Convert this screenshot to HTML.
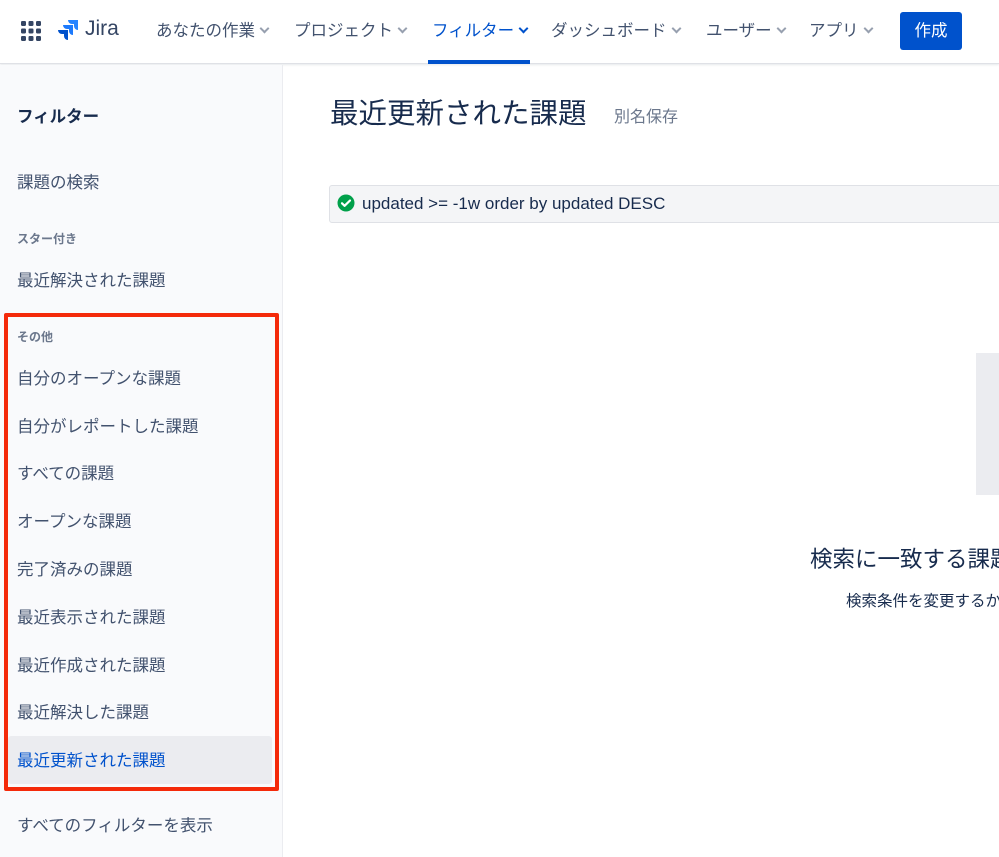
<!DOCTYPE html>
<html><head><meta charset="utf-8"><style>
*{margin:0;padding:0;box-sizing:border-box}
body{width:999px;height:857px;overflow:hidden;background:#fff;font-family:"Liberation Sans","Noto Sans CJK JP",sans-serif;color:#42526e;position:relative}
.a{position:absolute;white-space:nowrap}
#hdr{position:absolute;left:0;top:0;width:999px;height:64px;background:#fff;border-bottom:1px solid #dfe1e6;box-shadow:0 1px 2px rgba(9,30,66,.1)}
.nav{font-size:16.5px;color:#42526e;top:17px}
.chev{display:inline-block;width:7px;height:7px;border-right:2px solid #97a0af;border-bottom:2px solid #97a0af;transform:rotate(45deg);margin-left:6px;position:relative;top:-4px}
#side{position:absolute;left:0;top:65px;width:283px;height:792px;background:#f9fafc;border-right:1px solid #ebecf0}
.si{font-size:16.5px;color:#42526e;left:17px}
.sh{font-size:12px;font-weight:bold;color:#6b778c;left:17px}
</style></head><body>
<div id="hdr">
 <svg class="a" style="left:21px;top:21px" width="20" height="20" viewBox="0 0 20 20" fill="#344563">
  <rect x="0" y="0" width="5" height="5" rx="1.2"/><rect x="7.5" y="0" width="5" height="5" rx="1.2"/><rect x="15" y="0" width="5" height="5" rx="1.2"/>
  <rect x="0" y="7.5" width="5" height="5" rx="1.2"/><rect x="7.5" y="7.5" width="5" height="5" rx="1.2"/><rect x="15" y="7.5" width="5" height="5" rx="1.2"/>
  <rect x="0" y="15" width="5" height="5" rx="1.2"/><rect x="7.5" y="15" width="5" height="5" rx="1.2"/><rect x="15" y="15" width="5" height="5" rx="1.2"/>
 </svg>
 <svg class="a" style="left:57px;top:19px" width="22" height="22" viewBox="0 0 22 22">
  <path d="M21 1H11a4 4 0 0 0 4 4h2v2a4 4 0 0 0 4 4z" fill="#2684ff"/>
  <path d="M16 6H6a4 4 0 0 0 4 4h2v2a4 4 0 0 0 4 4z" fill="#1d7afc"/>
  <path d="M11 11H1a4 4 0 0 0 4 4h2v2a4 4 0 0 0 4 4z" fill="#0052cc"/>
 </svg>
 <div class="a" style="left:85px;top:17px;font-size:21px;color:#344563">Jira</div>
 <div class="a nav" style="left:156px">あなたの作業<span class="chev"></span></div>
 <div class="a nav" style="left:294px">プロジェクト<span class="chev"></span></div>
 <div class="a nav" style="left:432px;color:#0052cc">フィルター<span class="chev" style="border-color:#0052cc"></span></div>
 <div class="a" style="left:428px;top:60px;width:102px;height:4px;background:#0052cc"></div>
 <div class="a nav" style="left:551px">ダッシュボード<span class="chev"></span></div>
 <div class="a nav" style="left:706px">ユーザー<span class="chev"></span></div>
 <div class="a nav" style="left:809px">アプリ<span class="chev"></span></div>
 <div class="a" style="left:900px;top:12px;width:62px;height:38px;background:#0052cc;border-radius:3px;color:#fff;font-size:16.5px;text-align:center;line-height:38px">作成</div>
</div>
<div id="side">
 <div class="a si" style="top:38px;font-weight:bold;color:#172b4d">フィルター</div>
 <div class="a si" style="top:104px">課題の検索</div>
 <div class="a sh" style="top:165px">スター付き</div>
 <div class="a si" style="top:202px">最近解決された課題</div>
 <div class="a sh" style="top:263px">その他</div>
 <div class="a si" style="top:300px">自分のオープンな課題</div>
 <div class="a si" style="top:348px">自分がレポートした課題</div>
 <div class="a si" style="top:395px">すべての課題</div>
 <div class="a si" style="top:443px">オープンな課題</div>
 <div class="a si" style="top:491px">完了済みの課題</div>
 <div class="a si" style="top:539px">最近表示された課題</div>
 <div class="a si" style="top:587px">最近作成された課題</div>
 <div class="a si" style="top:634px">最近解決した課題</div>
 <div class="a" style="left:8px;top:671px;width:264px;height:48px;background:#ebecf0;border-radius:3px"></div>
 <div class="a si" style="top:682px;color:#0052cc">最近更新された課題</div>
 <div class="a si" style="top:747px">すべてのフィルターを表示</div>
</div>
<div class="a" style="left:4px;top:313px;width:275px;height:478px;border:4px solid #f42a0a;border-radius:2px"></div>
<div class="a" style="left:330px;top:91px;font-size:28.5px;color:#172b4d">最近更新された課題</div>
<div class="a" style="left:614px;top:103px;font-size:16px;color:#6b778c">別名保存</div>
<div class="a" style="left:329px;top:185px;width:680px;height:38px;background:#f4f5f7;border:1px solid #dfe1e6;border-radius:3px"></div>
<svg class="a" style="left:337px;top:194px" width="18" height="18" viewBox="0 0 18 18"><circle cx="9" cy="9" r="8.5" fill="#00a04a"/><path d="M5 9.3l2.6 2.5L13 6.5" stroke="#fff" stroke-width="2.2" fill="none" stroke-linecap="round" stroke-linejoin="round"/></svg>
<div class="a" style="left:362px;top:194px;font-size:17px;color:#172b4d">updated &gt;= -1w order by updated DESC</div>
<div class="a" style="left:976px;top:353px;width:23px;height:142px;background:#ebecf0"></div>
<div class="a" style="left:810px;top:542px;font-size:22.5px;color:#172b4d">検索に一致する課題</div>
<div class="a" style="left:846px;top:589px;font-size:15.5px;color:#172b4d">検索条件を変更するか</div>
</body></html>
